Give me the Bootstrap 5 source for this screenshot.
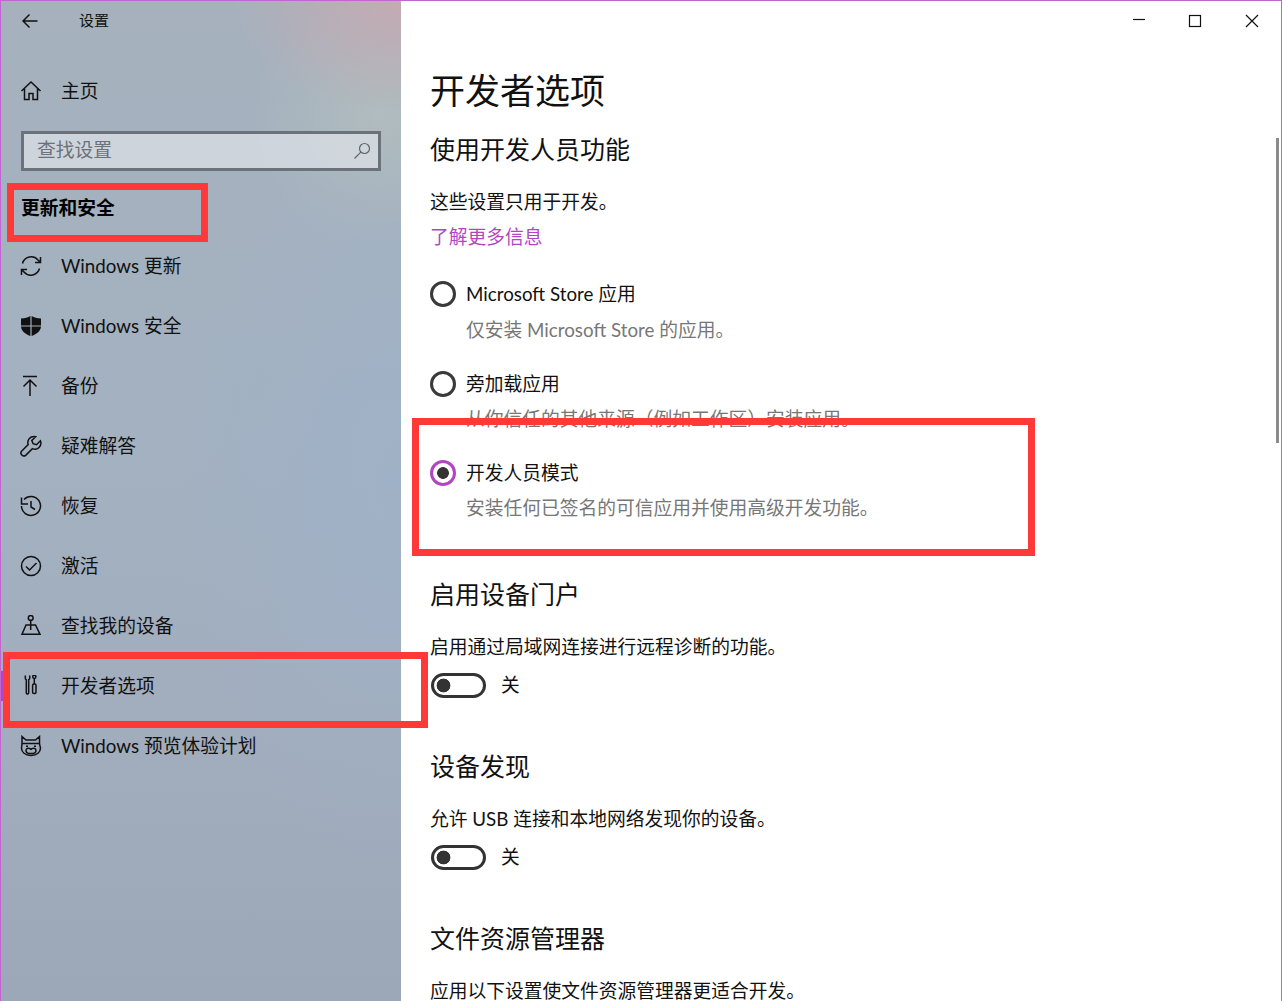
<!DOCTYPE html>
<html lang="zh-CN">
<head>
<meta charset="utf-8">
<title>设置</title>
<link href="https://cdn.jsdelivr.net/npm/bootstrap@5.3.0/dist/css/bootstrap.min.css" rel="stylesheet">
<style>
html,body{height:100%;overflow:hidden}
body{font-family:"Lato","Noto Sans CJK SC",sans-serif;font-size:18.75px;color:#111;background:#fff;border-top:1px solid #c264d2;border-left:1px solid #c264d2;border-right:1px solid #c264d2;position:relative}
.shell{height:1000px}
.side{width:400px;flex:none;background:
 radial-gradient(ellipse 170px 110px at 400px 0,rgba(200,170,178,.9),rgba(200,170,178,0) 100%),
 radial-gradient(ellipse 130px 130px at 380px 115px,rgba(178,190,190,.85),rgba(178,190,190,0) 100%),
 radial-gradient(ellipse 220px 400px at 400px 480px,rgba(158,178,204,.55),rgba(158,178,204,0) 100%),
 linear-gradient(180deg,#a6b1bd 0,#a3b1c1 45%,#a1adbd 75%,#9ca8b7 100%)}
.titlebar{height:39px;padding-left:21px}
.titlebar .ttl{font-size:15px;margin-left:41px;line-height:39px}
.nav-home{height:60px;margin-top:21px;padding-left:19px}
.nav-i{height:60px;padding-left:19px;color:#111;text-decoration:none;position:relative}
.ic{width:22px;height:22px;flex:none;margin-right:19px}
.ic svg,.ico-s{display:block;width:100%;height:100%;fill:none;stroke:#111;stroke-width:1.5}
.srch{margin:10px 20px 0;height:40px;border:3px solid #6c7279;background:rgba(222,226,232,.72);padding:0 7px 0 13px}
.srch input{border:0;background:transparent;outline:0;padding:0 0 2px;width:100%;font-size:18.75px;box-shadow:none;border-radius:0}
.srch input::placeholder{color:#6c7177;opacity:1}
.srch svg{width:18px;height:18px;flex:none;fill:none;stroke:#5f666c;stroke-width:1.2}
.grp{font-weight:700;height:30px;line-height:30px;margin:22px 0 13px 20px;font-size:18.75px;color:#000}
.active-bar{position:absolute;left:0;top:15px;width:3px;height:30px;background:#b146c2}
.main{padding-left:29px;flex:1;min-width:0;position:relative;overflow:hidden}
.h1x{font-size:35px;line-height:50px;margin:64px 0 0;font-weight:400;color:#111}
.h2x{font-size:25px;line-height:36px;margin:0;font-weight:400;color:#111}
.h2x.first{margin-top:16px}
.h2x.later{margin-top:48px}
.tx{line-height:30px;margin:0;height:30px;white-space:nowrap}
.lnk{color:#b146c2;text-decoration:none}
.muted-t{color:#777;padding-left:36px}
.rd{height:30px;gap:10px;margin:0;padding:0}
.rd .form-check-input{appearance:none;width:26px;height:26px;margin:0;flex:none;border:3px solid #3a3a3a;border-radius:50%;background:#fff;float:none}
.rd .form-check-input:checked{border-color:#b146c2;background:radial-gradient(circle,#333 0 5.5px,#fff 6.2px);background-color:#fff}
.rd .form-check-input:focus{box-shadow:none}
.tg{height:30px;gap:15px;padding:0 0 0 1px;margin:0}
.tg .form-check-input{appearance:none;width:55px;height:25px;margin:0;float:none;border:3px solid #333;border-radius:13px;background:radial-gradient(circle 7px at 9.5px 9.5px,#333 0 6.6px,transparent 7.2px) #fff;flex:none}
.tg .form-check-input:focus{box-shadow:none}
.mt19{margin-top:19px}.mt20{margin-top:20px}.mt5{margin-top:5px}.mt27{margin-top:27px}.mt24{margin-top:24px}.mt53{margin-top:53px}.mt8{margin-top:8px}.mt6{margin-top:6px}
.winbtns{position:absolute;top:0;right:0;height:39px;width:150px}
.winbtns svg{position:absolute;top:13px;width:14px;height:14px;fill:none;stroke:#111;stroke-width:1.2}
.scrollthumb{position:absolute;right:2px;top:137px;width:3px;height:305px;background:#8b8b8b}
.redbox{position:absolute;border:7px solid #ff3838;pointer-events:none}
.rb1{left:6px;top:182px;width:201px;height:59px}
.rb2{left:2px;top:651px;width:425px;height:76px}
.rb3{left:411px;top:417px;width:623px;height:138px}
</style>
</head>
<body>
<div class="shell d-flex">
  <aside class="side d-flex flex-column">
    <div class="titlebar d-flex align-items-center">
      <svg class="ico-s" style="width:16px;height:16px" viewBox="0 0 16 16"><path d="M15.5 8H1M7.500 1.500 1 8l6.500 6.500"/></svg>
      <span class="ttl">设置</span>
    </div>
    <div class="nav-home d-flex align-items-center">
      <span class="ic"><svg viewBox="0 0 22 22"><path d="M1.500 11 11 2l9.500 9M4.500 8.500V19.500h4.500v-6h4v6h4.500V8.500"/></svg></span>主页
    </div>
    <div class="srch d-flex align-items-center">
      <input class="form-control" type="text" placeholder="查找设置" aria-label="查找设置">
      <svg viewBox="0 0 18 18"><circle cx="11.500" cy="6.500" r="5"/><path d="M7.800 10.200 1.500 16.500"/></svg>
    </div>
    <div class="grp">更新和安全</div>
    <a class="nav-i d-flex align-items-center" href="#"><span class="ic"><svg viewBox="0 0 22 22"><path d="M2.500 8.500A9 9 0 0 1 18 5l2 2M19.500 13.500A9 9 0 0 1 4 17l-2-2M20.500 2v5.500H15M1.500 20v-5.500H7"/></svg></span>Windows 更新</a>
    <a class="nav-i d-flex align-items-center" href="#"><span class="ic"><svg viewBox="0 0 22 22"><path style="fill:#111;stroke:none" d="M1 3.500C5 3.500 8 2.500 10.400 1v9.400H1zM11.600 1C14 2.500 17 3.500 21 3.500v6.900h-9.400zM1 11.600h9.400V21C5 19 1.500 16.500 1 11.600zM11.600 11.600H21C20.500 16.500 17 19 11.600 21z"/></svg></span>Windows 安全</a>
    <a class="nav-i d-flex align-items-center" href="#"><span class="ic"><svg viewBox="0 0 22 22"><path d="M3 1.500h14M10 21V5M3.500 11.500 10 5l6.500 6.500"/></svg></span>备份</a>
    <a class="nav-i d-flex align-items-center" href="#"><span class="ic"><svg viewBox="0 0 22 22"><path d="M13.500 1.500a6 6 0 0 0-5.300 8L1.800 16a2.900 2.900 0 0 0 4.100 4.100l6.500-6.500a6 6 0 0 0 8-7.800l-3.900 3.900-3.400-1L11.800 5.500l3.900-3.800a6 6 0 0 0-2.200-.2z"/></svg></span>疑难解答</a>
    <a class="nav-i d-flex align-items-center" href="#"><span class="ic"><svg viewBox="0 0 22 22"><path d="M4 4.500A9.500 9.500 0 1 1 1.500 11M1.500 2.500v6.500H8M11 6v6l4 2.500"/></svg></span>恢复</a>
    <a class="nav-i d-flex align-items-center" href="#"><span class="ic"><svg viewBox="0 0 22 22"><circle cx="11" cy="11" r="9.500"/><path d="M6 11.500 9.500 15 16.500 8"/></svg></span>激活</a>
    <a class="nav-i d-flex align-items-center" href="#"><span class="ic"><svg viewBox="0 0 22 22"><circle cx="10.700" cy="2.900" r="2.400"/><path d="M10.700 5.300V15M6 10h9.500l4.500 9.300H2z"/></svg></span>查找我的设备</a>
    <a class="nav-i d-flex align-items-center" href="#"><span class="active-bar"></span><span class="ic"><svg viewBox="0 0 22 22"><path d="M5.300 .5v2.500a2 2 0 0 0 1 1.800v13a1.200 1.200 0 0 0 2.400 0v-13a2 2 0 0 0 1-1.800V.5"/><circle cx="14.300" cy="1.800" r="1.600"/><path d="M14.300 3.400V9"/><rect x="12.600" y="9" width="3.400" height="9.500" rx="1.200"/></svg></span>开发者选项</a>
    <a class="nav-i d-flex align-items-center" href="#"><span class="ic"><svg viewBox="0 0 22 22"><path d="M2 1.500 6 5h9.500l4-3.500V9l1 4c0 4-3.500 7.500-9.500 7.500S1.500 17 1.500 13L2 9zM2 8.500h17.500"/><path d="M11 14.500c-1.500-2-5-1.500-5 1 0 1.500 1 2.500 2.500 3M11 14.500c1.500-2 5-1.500 5 1 0 1.500-1 2.500-2.500 3M8.500 18.500h5"/><path style="stroke-width:2" d="M7 10.500v1.500M15 10.500v1.500"/></svg></span>Windows 预览体验计划</a>
  </aside>
  <main class="main">
    <h1 class="h1x">开发者选项</h1>
    <h2 class="h2x first">使用开发人员功能</h2>
    <p class="tx mt20">这些设置只用于开发。</p>
    <p class="tx mt5"><a class="lnk" href="#">了解更多信息</a></p>
    <div class="form-check rd d-flex align-items-center mt27"><input class="form-check-input" type="radio" name="dev" id="r1"><label for="r1">Microsoft Store 应用</label></div>
    <p class="tx mt6 muted-t">仅安装 Microsoft Store 的应用。</p>
    <div class="form-check rd d-flex align-items-center mt24"><input class="form-check-input" type="radio" name="dev" id="r2"><label for="r2">旁加载应用</label></div>
    <p class="tx mt5 muted-t">从你信任的其他来源（例如工作区）安装应用。</p>
    <div class="form-check rd d-flex align-items-center mt24"><input class="form-check-input" type="radio" name="dev" id="r3" checked><label for="r3">开发人员模式</label></div>
    <p class="tx mt5 muted-t">安装任何已签名的可信应用并使用高级开发功能。</p>
    <h2 class="h2x mt53">启用设备门户</h2>
    <p class="tx mt20">启用通过局域网连接进行远程诊断的功能。</p>
    <div class="form-check tg d-flex align-items-center mt8"><input class="form-check-input" type="checkbox" id="t1"><label for="t1">关</label></div>
    <h2 class="h2x later">设备发现</h2>
    <p class="tx mt20">允许 USB 连接和本地网络发现你的设备。</p>
    <div class="form-check tg d-flex align-items-center mt8"><input class="form-check-input" type="checkbox" id="t2"><label for="t2">关</label></div>
    <h2 class="h2x later">文件资源管理器</h2>
    <p class="tx mt20">应用以下设置使文件资源管理器更适合开发。</p>
    <div class="winbtns">
      <svg style="left:1px" viewBox="0 0 14 14"><path d="M1 5.500h12"/></svg>
      <svg style="left:57px" viewBox="0 0 14 14"><rect x="1.500" y="1.500" width="11" height="11"/></svg>
      <svg style="left:114px" viewBox="0 0 14 14"><path d="M1 1l12 12M13 1 1 13"/></svg>
    </div>
    <div class="scrollthumb"></div>
  </main>
</div>
<div class="redbox rb1"></div>
<div class="redbox rb2"></div>
<div class="redbox rb3"></div>
<script src="https://cdn.jsdelivr.net/npm/bootstrap@5.3.0/dist/js/bootstrap.bundle.min.js"></script>
</body>
</html>
